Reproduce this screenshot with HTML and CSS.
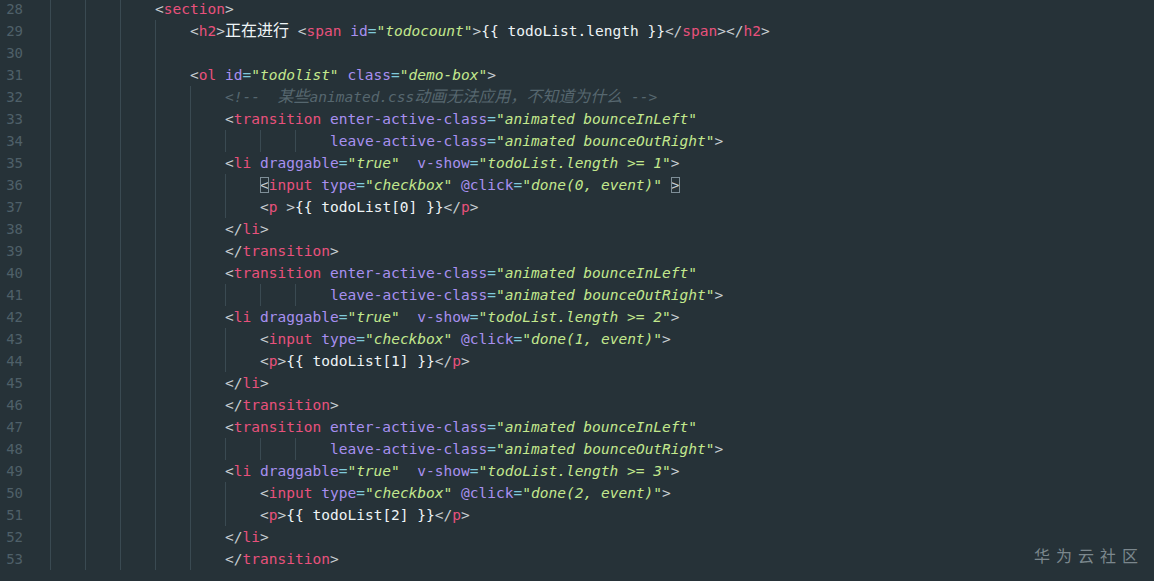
FILE: index.html
```html
<!DOCTYPE html>
<html lang="zh">
<head>
<meta charset="utf-8">
<title>editor</title>
<link rel="stylesheet" href="styles.css">
</head>
<body>
<div class="editor">
  <div class="row"><span class="num">28</span><span class="code"><i class="g"></i><i class="g"></i><i class="g"></i><span class="p">&lt;</span><span class="t">section</span><span class="p">&gt;</span></span></div>
  <div class="row"><span class="num">29</span><span class="code"><i class="g"></i><i class="g"></i><i class="g"></i><i class="g"></i><span class="p">&lt;</span><span class="t">h2</span><span class="p">&gt;</span><span class="cj x">正在进行</span><span class="x"> </span><span class="p">&lt;</span><span class="t">span</span> <span class="a">id</span><span class="e">=</span><span class="s">"todocount"</span><span class="p">&gt;</span><span class="x">{{ todoList.length }}</span><span class="p">&lt;/</span><span class="t">span</span><span class="p">&gt;&lt;/</span><span class="t">h2</span><span class="p">&gt;</span></span></div>
  <div class="row"><span class="num">30</span><span class="code"><i class="g"></i><i class="g"></i><i class="g"></i><i class="g"></i></span></div>
  <div class="row"><span class="num">31</span><span class="code"><i class="g"></i><i class="g"></i><i class="g"></i><i class="g"></i><span class="p">&lt;</span><span class="t">ol</span> <span class="a">id</span><span class="e">=</span><span class="s">"todolist"</span> <span class="a">class</span><span class="e">=</span><span class="s">"demo-box"</span><span class="p">&gt;</span></span></div>
  <div class="row"><span class="num">32</span><span class="code"><i class="g"></i><i class="g"></i><i class="g"></i><i class="g"></i><i class="g"></i><span class="c">&lt;!--  <span class="cj">某些</span>animated.css<span class="cj">动画无法应用，不知道为什么</span> --&gt;</span></span></div>
  <div class="row"><span class="num">33</span><span class="code"><i class="g"></i><i class="g"></i><i class="g"></i><i class="g"></i><i class="g"></i><span class="p">&lt;</span><span class="t">transition</span> <span class="a">enter-active-class</span><span class="e">=</span><span class="s">"animated bounceInLeft"</span></span></div>
  <div class="row"><span class="num">34</span><span class="code"><i class="g"></i><i class="g"></i><i class="g"></i><i class="g"></i><i class="g"></i><i class="g"></i><i class="g"></i><i class="g"></i><span class="a">leave-active-class</span><span class="e">=</span><span class="s">"animated bounceOutRight"</span><span class="p">&gt;</span></span></div>
  <div class="row"><span class="num">35</span><span class="code"><i class="g"></i><i class="g"></i><i class="g"></i><i class="g"></i><i class="g"></i><span class="p">&lt;</span><span class="t">li</span> <span class="a">draggable</span><span class="e">=</span><span class="s">"true"</span>  <span class="a">v-show</span><span class="e">=</span><span class="s">"todoList.length &gt;= 1"</span><span class="p">&gt;</span></span></div>
  <div class="row"><span class="num">36</span><span class="code"><i class="g"></i><i class="g"></i><i class="g"></i><i class="g"></i><i class="g"></i><i class="g"></i><span class="p mb">&lt;</span><span class="t">input</span> <span class="a">type</span><span class="e">=</span><span class="s">"checkbox"</span> <span class="a">@click</span><span class="e">=</span><span class="s">"done(0, event)"</span> <span class="p mb">&gt;</span></span></div>
  <div class="row"><span class="num">37</span><span class="code"><i class="g"></i><i class="g"></i><i class="g"></i><i class="g"></i><i class="g"></i><i class="g"></i><span class="p">&lt;</span><span class="t">p</span> <span class="p">&gt;</span><span class="x">{{ todoList[0] }}</span><span class="p">&lt;/</span><span class="t">p</span><span class="p">&gt;</span></span></div>
  <div class="row"><span class="num">38</span><span class="code"><i class="g"></i><i class="g"></i><i class="g"></i><i class="g"></i><i class="g"></i><span class="p">&lt;/</span><span class="t">li</span><span class="p">&gt;</span></span></div>
  <div class="row"><span class="num">39</span><span class="code"><i class="g"></i><i class="g"></i><i class="g"></i><i class="g"></i><i class="g"></i><span class="p">&lt;/</span><span class="t">transition</span><span class="p">&gt;</span></span></div>
  <div class="row"><span class="num">40</span><span class="code"><i class="g"></i><i class="g"></i><i class="g"></i><i class="g"></i><i class="g"></i><span class="p">&lt;</span><span class="t">transition</span> <span class="a">enter-active-class</span><span class="e">=</span><span class="s">"animated bounceInLeft"</span></span></div>
  <div class="row"><span class="num">41</span><span class="code"><i class="g"></i><i class="g"></i><i class="g"></i><i class="g"></i><i class="g"></i><i class="g"></i><i class="g"></i><i class="g"></i><span class="a">leave-active-class</span><span class="e">=</span><span class="s">"animated bounceOutRight"</span><span class="p">&gt;</span></span></div>
  <div class="row"><span class="num">42</span><span class="code"><i class="g"></i><i class="g"></i><i class="g"></i><i class="g"></i><i class="g"></i><span class="p">&lt;</span><span class="t">li</span> <span class="a">draggable</span><span class="e">=</span><span class="s">"true"</span>  <span class="a">v-show</span><span class="e">=</span><span class="s">"todoList.length &gt;= 2"</span><span class="p">&gt;</span></span></div>
  <div class="row"><span class="num">43</span><span class="code"><i class="g"></i><i class="g"></i><i class="g"></i><i class="g"></i><i class="g"></i><i class="g"></i><span class="p">&lt;</span><span class="t">input</span> <span class="a">type</span><span class="e">=</span><span class="s">"checkbox"</span> <span class="a">@click</span><span class="e">=</span><span class="s">"done(1, event)"</span><span class="p">&gt;</span></span></div>
  <div class="row"><span class="num">44</span><span class="code"><i class="g"></i><i class="g"></i><i class="g"></i><i class="g"></i><i class="g"></i><i class="g"></i><span class="p">&lt;</span><span class="t">p</span><span class="p">&gt;</span><span class="x">{{ todoList[1] }}</span><span class="p">&lt;/</span><span class="t">p</span><span class="p">&gt;</span></span></div>
  <div class="row"><span class="num">45</span><span class="code"><i class="g"></i><i class="g"></i><i class="g"></i><i class="g"></i><i class="g"></i><span class="p">&lt;/</span><span class="t">li</span><span class="p">&gt;</span></span></div>
  <div class="row"><span class="num">46</span><span class="code"><i class="g"></i><i class="g"></i><i class="g"></i><i class="g"></i><i class="g"></i><span class="p">&lt;/</span><span class="t">transition</span><span class="p">&gt;</span></span></div>
  <div class="row"><span class="num">47</span><span class="code"><i class="g"></i><i class="g"></i><i class="g"></i><i class="g"></i><i class="g"></i><span class="p">&lt;</span><span class="t">transition</span> <span class="a">enter-active-class</span><span class="e">=</span><span class="s">"animated bounceInLeft"</span></span></div>
  <div class="row"><span class="num">48</span><span class="code"><i class="g"></i><i class="g"></i><i class="g"></i><i class="g"></i><i class="g"></i><i class="g"></i><i class="g"></i><i class="g"></i><span class="a">leave-active-class</span><span class="e">=</span><span class="s">"animated bounceOutRight"</span><span class="p">&gt;</span></span></div>
  <div class="row"><span class="num">49</span><span class="code"><i class="g"></i><i class="g"></i><i class="g"></i><i class="g"></i><i class="g"></i><span class="p">&lt;</span><span class="t">li</span> <span class="a">draggable</span><span class="e">=</span><span class="s">"true"</span>  <span class="a">v-show</span><span class="e">=</span><span class="s">"todoList.length &gt;= 3"</span><span class="p">&gt;</span></span></div>
  <div class="row"><span class="num">50</span><span class="code"><i class="g"></i><i class="g"></i><i class="g"></i><i class="g"></i><i class="g"></i><i class="g"></i><span class="p">&lt;</span><span class="t">input</span> <span class="a">type</span><span class="e">=</span><span class="s">"checkbox"</span> <span class="a">@click</span><span class="e">=</span><span class="s">"done(2, event)"</span><span class="p">&gt;</span></span></div>
  <div class="row"><span class="num">51</span><span class="code"><i class="g"></i><i class="g"></i><i class="g"></i><i class="g"></i><i class="g"></i><i class="g"></i><span class="p">&lt;</span><span class="t">p</span><span class="p">&gt;</span><span class="x">{{ todoList[2] }}</span><span class="p">&lt;/</span><span class="t">p</span><span class="p">&gt;</span></span></div>
  <div class="row"><span class="num">52</span><span class="code"><i class="g"></i><i class="g"></i><i class="g"></i><i class="g"></i><i class="g"></i><span class="p">&lt;/</span><span class="t">li</span><span class="p">&gt;</span></span></div>
  <div class="row"><span class="num">53</span><span class="code"><i class="g"></i><i class="g"></i><i class="g"></i><i class="g"></i><i class="g"></i><span class="p">&lt;/</span><span class="t">transition</span><span class="p">&gt;</span></span></div>
</div>
<div class="watermark">华为云社区</div>
</body>
</html>
```

FILE: styles.css
```css
html, body {
  margin: 0;
  padding: 0;
  background: #263238;
  width: 1154px;
  height: 581px;
  overflow: hidden;
}

.editor {
  margin-top: -2px;
  font-family: "DejaVu Sans Mono", "Liberation Mono", monospace;
  font-size: 14.53px;
  color: #eeffff;
}

.row {
  display: flex;
  height: 22px;
  line-height: 22px;
}

.num {
  width: 50px;
  flex: none;
  box-sizing: border-box;
  padding-right: 27px;
  text-align: right;
  color: #4f6069;
  font-size: 14px;
}

.code {
  display: block;
  white-space: pre;
}

.g {
  display: inline-block;
  width: 35px;
  height: 22px;
  vertical-align: top;
  box-sizing: border-box;
  border-left: 1px solid #3a4a52;
}

.p { color: #c6ced2; }
.t { color: #e8517c; }
.a { color: #a890f0; }
.e { color: #7fcadb; }
.s { color: #c3e88d; font-style: italic; }
.x { color: #eef4f6; }
.c { color: #56676f; font-style: italic; }

.cj {
  font-family: "Noto Sans CJK SC", sans-serif;
  font-size: 16px;
  line-height: 16px;
}

.mb {
  outline: 1px solid #7f8f98;
  outline-offset: -1px;
}

.watermark {
  position: absolute;
  right: 10px;
  bottom: 16px;
  font-family: "Noto Sans CJK SC", sans-serif;
  font-size: 16px;
  letter-spacing: 6px;
  color: #7b878d;
  line-height: 20px;
}
```
